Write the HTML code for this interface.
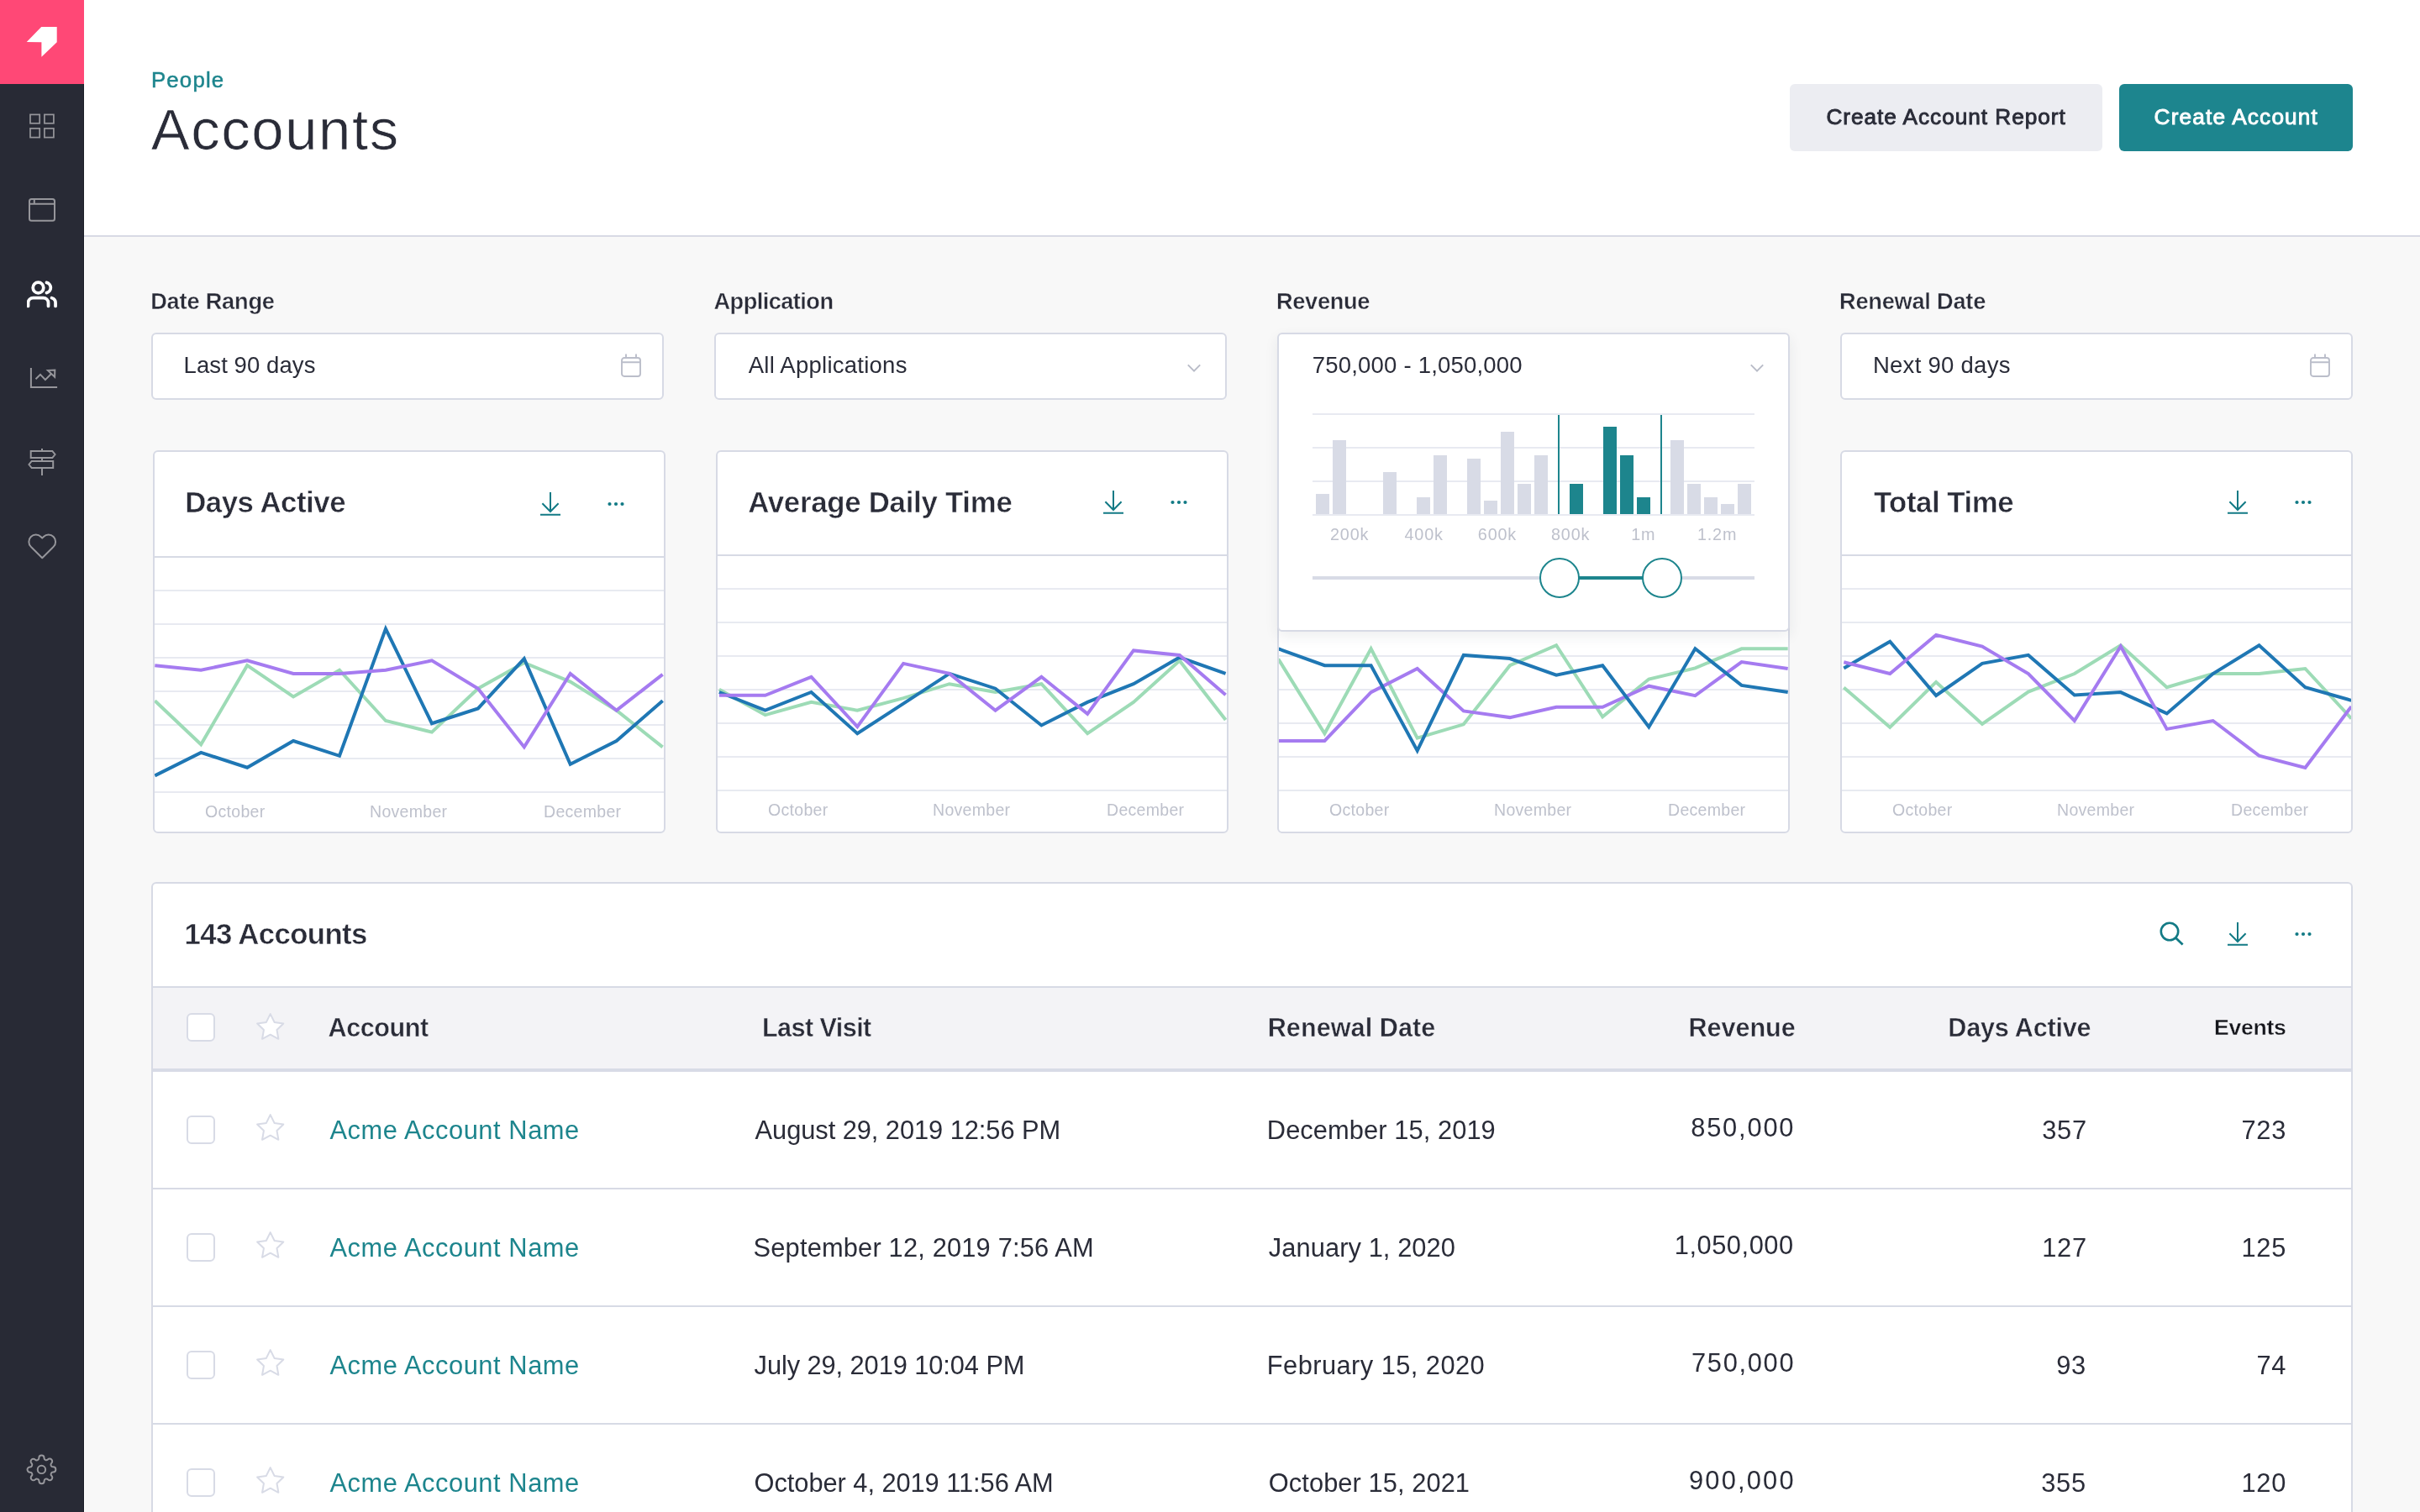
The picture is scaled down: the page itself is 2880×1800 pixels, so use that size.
<!DOCTYPE html>
<html><head><meta charset="utf-8"><title>Accounts</title>
<style>
html,body{margin:0;padding:0}
body{width:2880px;height:1800px;overflow:hidden;position:relative;background:#f8f8f8;font-family:"Liberation Sans",sans-serif}
.abs{position:absolute}
.txt{position:absolute;left:0;top:0;width:2880px;height:1800px;will-change:transform}
.t{position:absolute;white-space:pre;line-height:1;font-family:"Liberation Sans",sans-serif}
.card{position:absolute;box-sizing:border-box;background:#fff;border:2px solid #d7dae5;border-radius:6px}
.hl{position:absolute;height:2px}
.cb{position:absolute;left:222px;width:34px;height:34px;box-sizing:border-box;border:2px solid #d8dbe6;border-radius:6px}
@media (max-width:2000px){body{zoom:.5}}
.inp{position:absolute;top:396px;width:610px;height:80px;box-sizing:border-box;background:#fff;border:2px solid #d7dae5;border-radius:6px}
</style></head><body>
<div class="abs" style="left:100px;top:0;width:2780px;height:280px;background:#fff"></div>
<div class="abs" style="left:100px;top:280px;width:2780px;height:2px;background:#d8dae5"></div>
<div class="abs" style="left:100px;top:282px;width:1px;height:1518px;background:#fff"></div>
<div class="abs" style="left:0;top:0;width:100px;height:1800px;background:#282a35"></div>
<div class="abs" style="left:99px;top:100px;width:1px;height:1700px;background:#1e2029"></div>
<div class="abs" style="left:0;top:0;width:100px;height:100px;background:#ff4876"></div>
<svg class="abs" style="left:0;top:0;width:100px;height:100px" viewBox="0 0 100 100"><polygon points="49.2,32 67.7,32 67.7,50.3 49.4,67.8 49.4,50.2 31.7,50" fill="#fff"/></svg>
<svg class="abs" style="left:30px;top:130px;width:40px;height:40px" viewBox="30 130 40 40"><g fill="none" stroke="#96969b" stroke-width="1.7"><rect x="36" y="136.4" width="11.2" height="10.4"/><rect x="52.9" y="136.4" width="11" height="10.4"/><rect x="36" y="152.9" width="11.2" height="10.7"/><rect x="52.9" y="152.9" width="11" height="10.7"/></g></svg>
<svg class="abs" style="left:30px;top:230px;width:40px;height:40px" viewBox="30 230 40 40"><g fill="none" stroke="#96969b" stroke-width="2"><rect x="35" y="236.9" width="30" height="25.8" rx="2.5"/><path d="M35 242.8H65M40.8 237V242.8"/></g></svg>
<svg class="abs" style="left:32px;top:332px;width:36px;height:36px" viewBox="0 0 24 24"><g fill="none" stroke="#fff" stroke-width="2.5" stroke-linecap="round" stroke-linejoin="round"><path d="M17 21.6v-2.6a4 4 0 0 0-4-4H5a4 4 0 0 0-4 4v2.6"/><circle cx="9" cy="7" r="4.2"/><path d="M22.7 21.6v-2.6a4 4 0 0 0-3-3.87"/><path d="M15.6 2.9a4.2 4.2 0 0 1 0 8.2"/></g></svg>
<svg class="abs" style="left:30px;top:430px;width:44px;height:40px" viewBox="30 430 44 40"><g fill="none" stroke="#96969b" stroke-width="2"><path d="M36.9 438V461H68.1"/><path d="M42.5 451.2L48 445.9L53.9 452.1L61 445"/><path d="M56.9 440.9L65.3 440.5L65.1 448.7Z" stroke-linejoin="miter" stroke-miterlimit="3"/></g></svg>
<svg class="abs" style="left:30px;top:530px;width:40px;height:40px" viewBox="30 530 40 40"><g fill="none" stroke="#96969b" stroke-width="2"><path d="M50 534V537M50 545V549M50 557V566"/><path d="M36.7 537H62.3L65.5 541L62.3 545H36.7Z"/><path d="M63.2 549H37.7L34.5 553L37.7 557H63.2Z"/></g></svg>
<svg class="abs" style="left:31.76px;top:632.3px;width:36.48px;height:36.48px" viewBox="0 0 24 24"><path d="M20.84 4.61a5.5 5.5 0 0 0-7.78 0L12 5.67l-1.06-1.06a5.5 5.5 0 0 0-7.78 7.78l1.06 1.06L12 21.23l7.78-7.78 1.06-1.06a5.5 5.5 0 0 0 0-7.78z" fill="none" stroke="#96969b" stroke-width="1.3" stroke-linejoin="round"/></svg>
<svg class="abs" style="left:31.2px;top:1731.3px;width:36.88px;height:36.88px" viewBox="0 0 24 24"><g fill="none" stroke="#96969b" stroke-width="1.3"><circle cx="12" cy="12" r="3.05"/><path d="M19.4 15a1.65 1.65 0 0 0 .33 1.82l.06.06a2 2 0 0 1 0 2.83 2 2 0 0 1-2.83 0l-.06-.06a1.65 1.65 0 0 0-1.82-.33 1.65 1.65 0 0 0-1 1.51V21a2 2 0 0 1-2 2 2 2 0 0 1-2-2v-.09A1.65 1.65 0 0 0 9 19.4a1.65 1.65 0 0 0-1.82.33l-.06.06a2 2 0 0 1-2.83 0 2 2 0 0 1 0-2.83l.06-.06a1.65 1.65 0 0 0 .33-1.82 1.65 1.65 0 0 0-1.51-1H3a2 2 0 0 1-2-2 2 2 0 0 1 2-2h.09A1.65 1.65 0 0 0 4.6 9a1.65 1.65 0 0 0-.33-1.82l-.06-.06a2 2 0 0 1 0-2.83 2 2 0 0 1 2.83 0l.06.06a1.65 1.65 0 0 0 1.82.33H9a1.65 1.65 0 0 0 1-1.51V3a2 2 0 0 1 2-2 2 2 0 0 1 2 2v.09a1.65 1.65 0 0 0 1 1.51 1.65 1.65 0 0 0 1.82-.33l.06-.06a2 2 0 0 1 2.83 0 2 2 0 0 1 0 2.83l-.06.06a1.65 1.65 0 0 0-.33 1.82V9a1.65 1.65 0 0 0 1.51 1H21a2 2 0 0 1 2 2 2 2 0 0 1-2 2h-.09a1.65 1.65 0 0 0-1.51 1z"/></g></svg>
<div class="abs" style="left:2130px;top:100px;width:372px;height:80px;border-radius:6px;background:#ecedf2"></div>
<div class="abs" style="left:2522px;top:100px;width:278px;height:80px;border-radius:6px;background:#1d858e"></div>
<div class="inp" style="left:180px"></div>
<div class="inp" style="left:850px"></div>
<div class="inp" style="left:2190px"></div>
<svg class="abs" style="left:738px;top:420px;width:26px;height:30px" viewBox="-2 -6 26 30"><rect x="0" y="0" width="22" height="22" rx="3" fill="none" stroke="#bbbeca" stroke-width="1.9"/><path d="M0 5.2H22M5 -4.5V0M17 -4.5V0" stroke="#bbbeca" stroke-width="1.9" fill="none"/></svg>
<svg class="abs" style="left:2748px;top:420px;width:26px;height:30px" viewBox="-2 -6 26 30"><rect x="0" y="0" width="22" height="22" rx="3" fill="none" stroke="#bbbeca" stroke-width="1.9"/><path d="M0 5.2H22M5 -4.5V0M17 -4.5V0" stroke="#bbbeca" stroke-width="1.9" fill="none"/></svg>
<svg class="abs" style="left:1412px;top:432px;width:18px;height:12px" viewBox="-9 -6 18 12"><path d="M-7.2 -3.6L0 3.6L7.2 -3.6" stroke="#b9bcc8" stroke-width="2" fill="none"/></svg>
<div class="card" style="left:182px;top:536px;width:610px;height:456px"></div>
<div class="hl" style="left:184px;top:662px;width:606px;background:#d7dae5"></div>
<div class="hl" style="left:184px;top:702px;width:606px;background:#e8eaf1"></div>
<div class="hl" style="left:184px;top:742px;width:606px;background:#e8eaf1"></div>
<div class="hl" style="left:184px;top:782px;width:606px;background:#e8eaf1"></div>
<div class="hl" style="left:184px;top:822px;width:606px;background:#e8eaf1"></div>
<div class="hl" style="left:184px;top:862px;width:606px;background:#e8eaf1"></div>
<div class="hl" style="left:184px;top:902px;width:606px;background:#e8eaf1"></div>
<div class="hl" style="left:184px;top:942px;width:606px;background:#e8eaf1"></div>
<div class="card" style="left:852px;top:536px;width:610px;height:456px"></div>
<div class="hl" style="left:854px;top:660px;width:606px;background:#d7dae5"></div>
<div class="hl" style="left:854px;top:700px;width:606px;background:#e8eaf1"></div>
<div class="hl" style="left:854px;top:740px;width:606px;background:#e8eaf1"></div>
<div class="hl" style="left:854px;top:780px;width:606px;background:#e8eaf1"></div>
<div class="hl" style="left:854px;top:820px;width:606px;background:#e8eaf1"></div>
<div class="hl" style="left:854px;top:860px;width:606px;background:#e8eaf1"></div>
<div class="hl" style="left:854px;top:900px;width:606px;background:#e8eaf1"></div>
<div class="hl" style="left:854px;top:940px;width:606px;background:#e8eaf1"></div>
<div class="card" style="left:1520px;top:536px;width:610px;height:456px"></div>
<div class="hl" style="left:1522px;top:660px;width:606px;background:#d7dae5"></div>
<div class="hl" style="left:1522px;top:700px;width:606px;background:#e8eaf1"></div>
<div class="hl" style="left:1522px;top:740px;width:606px;background:#e8eaf1"></div>
<div class="hl" style="left:1522px;top:780px;width:606px;background:#e8eaf1"></div>
<div class="hl" style="left:1522px;top:820px;width:606px;background:#e8eaf1"></div>
<div class="hl" style="left:1522px;top:860px;width:606px;background:#e8eaf1"></div>
<div class="hl" style="left:1522px;top:900px;width:606px;background:#e8eaf1"></div>
<div class="hl" style="left:1522px;top:940px;width:606px;background:#e8eaf1"></div>
<div class="card" style="left:2190px;top:536px;width:610px;height:456px"></div>
<div class="hl" style="left:2192px;top:660px;width:606px;background:#d7dae5"></div>
<div class="hl" style="left:2192px;top:700px;width:606px;background:#e8eaf1"></div>
<div class="hl" style="left:2192px;top:740px;width:606px;background:#e8eaf1"></div>
<div class="hl" style="left:2192px;top:780px;width:606px;background:#e8eaf1"></div>
<div class="hl" style="left:2192px;top:820px;width:606px;background:#e8eaf1"></div>
<div class="hl" style="left:2192px;top:860px;width:606px;background:#e8eaf1"></div>
<div class="hl" style="left:2192px;top:900px;width:606px;background:#e8eaf1"></div>
<div class="hl" style="left:2192px;top:940px;width:606px;background:#e8eaf1"></div>
<svg class="abs" style="left:184px;top:660px;width:606px;height:300px" viewBox="184 660 606 300"><polyline points="184.3,834.3 239.2,886.2 294.2,792.2 349.1,829.5 404.0,797.7 459.0,858.0 513.9,871.6 568.9,819.7 623.8,789.0 678.7,811.6 733.7,845.7 788.6,889.4" fill="none" stroke="#9ddbb6" stroke-width="4" stroke-linejoin="miter"/><polyline points="184.3,923.4 239.2,895.9 294.2,913.7 349.1,882.0 404.0,899.8 459.0,748.5 513.9,861.2 568.9,843.4 623.8,784.1 678.7,909.8 733.7,882.0 788.6,834.3" fill="none" stroke="#1f77b4" stroke-width="4" stroke-linejoin="miter"/><polyline points="184.3,792.2 239.2,797.7 294.2,786.4 349.1,801.9 404.0,801.9 459.0,797.7 513.9,786.4 568.9,819.7 623.8,889.4 678.7,801.9 733.7,845.7 788.6,802.9" fill="none" stroke="#a57bf0" stroke-width="4" stroke-linejoin="miter"/></svg>
<svg class="abs" style="left:854px;top:660px;width:606px;height:300px" viewBox="854 660 606 300"><polyline points="855.9,820.7 910.7,851.2 965.5,835.9 1020.3,845.7 1075.1,831.1 1129.9,814.2 1184.6,824.0 1239.4,814.2 1294.2,873.2 1349.0,835.9 1403.8,786.4 1458.6,857.0" fill="none" stroke="#9ddbb6" stroke-width="4" stroke-linejoin="miter"/><polyline points="855.9,824.0 910.7,845.7 965.5,824.0 1020.3,873.2 1075.1,837.6 1129.9,801.9 1184.6,819.7 1239.4,863.5 1294.2,835.9 1349.0,814.2 1403.8,782.5 1458.6,801.9" fill="none" stroke="#1f77b4" stroke-width="4" stroke-linejoin="miter"/><polyline points="855.9,827.8 910.7,827.8 965.5,805.8 1020.3,865.1 1075.1,789.9 1129.9,801.9 1184.6,845.7 1239.4,805.8 1294.2,849.9 1349.0,774.4 1403.8,779.9 1458.6,827.2" fill="none" stroke="#a57bf0" stroke-width="4" stroke-linejoin="miter"/></svg>
<svg class="abs" style="left:1522px;top:660px;width:606px;height:300px" viewBox="1522 660 606 300"><polyline points="1521.3,784.5 1576.4,873.2 1631.6,772.3 1686.7,878.6 1741.8,862.3 1796.9,792.2 1852.1,768.2 1907.2,853.3 1962.3,808.5 2017.4,795.4 2072.6,772.3 2127.7,772.3" fill="none" stroke="#9ddbb6" stroke-width="4" stroke-linejoin="miter"/><polyline points="1521.3,881.9 1576.4,881.9 1631.6,824.1 1686.7,796.0 1741.8,846.4 1796.9,854.1 1852.1,841.8 1907.2,841.8 1962.3,816.7 2017.4,828.2 2072.6,788.1 2127.7,796.0" fill="none" stroke="#a57bf0" stroke-width="4" stroke-linejoin="miter"/><polyline points="1521.3,772.3 1576.4,792.2 1631.6,792.2 1686.7,893.6 1741.8,779.9 1796.9,784.0 1852.1,803.6 1907.2,792.2 1962.3,865.5 2017.4,772.3 2072.6,815.9 2127.7,824.1" fill="none" stroke="#1f77b4" stroke-width="4" stroke-linejoin="miter"/></svg>
<svg class="abs" style="left:2192px;top:660px;width:606px;height:300px" viewBox="2192 660 606 300"><polyline points="2194.3,818.4 2249.2,865.8 2304.1,811.9 2359.0,861.9 2413.9,823.6 2468.8,802.0 2523.8,768.2 2578.7,818.2 2633.6,802.0 2688.5,802.0 2743.4,796.0 2798.3,855.4" fill="none" stroke="#9ddbb6" stroke-width="4" stroke-linejoin="miter"/><polyline points="2194.3,795.5 2249.2,763.7 2304.1,828.0 2359.0,789.8 2413.9,779.9 2468.8,827.5 2523.8,824.1 2578.7,849.4 2633.6,802.0 2688.5,768.2 2743.4,818.2 2798.3,833.8" fill="none" stroke="#1f77b4" stroke-width="4" stroke-linejoin="miter"/><polyline points="2194.3,788.2 2249.2,802.0 2304.1,755.9 2359.0,769.5 2413.9,802.0 2468.8,858.0 2523.8,769.5 2578.7,867.9 2633.6,858.0 2688.5,899.6 2743.4,914.0 2798.3,841.1" fill="none" stroke="#a57bf0" stroke-width="4" stroke-linejoin="miter"/></svg>
<svg class="abs" style="left:641px;top:584px;width:28px;height:32px" viewBox="-14 -2 28 32"><path d="M0 0V23M-9.6 13.3L0 23L9.6 13.3M-12 26.8H12" fill="none" stroke="#127a85" stroke-width="2"/></svg>
<svg class="abs" style="left:721px;top:596px;width:24px;height:8px" viewBox="-12 -4 24 8"><circle cx="-7.5" cy="0" r="2.1" fill="#127a85"/><circle cx="0" cy="0" r="2.1" fill="#127a85"/><circle cx="7.5" cy="0" r="2.1" fill="#127a85"/></svg>
<svg class="abs" style="left:1311px;top:582px;width:28px;height:32px" viewBox="-14 -2 28 32"><path d="M0 0V23M-9.6 13.3L0 23L9.6 13.3M-12 26.8H12" fill="none" stroke="#127a85" stroke-width="2"/></svg>
<svg class="abs" style="left:1391px;top:594px;width:24px;height:8px" viewBox="-12 -4 24 8"><circle cx="-7.5" cy="0" r="2.1" fill="#127a85"/><circle cx="0" cy="0" r="2.1" fill="#127a85"/><circle cx="7.5" cy="0" r="2.1" fill="#127a85"/></svg>
<svg class="abs" style="left:2649px;top:582px;width:28px;height:32px" viewBox="-14 -2 28 32"><path d="M0 0V23M-9.6 13.3L0 23L9.6 13.3M-12 26.8H12" fill="none" stroke="#127a85" stroke-width="2"/></svg>
<svg class="abs" style="left:2729px;top:594px;width:24px;height:8px" viewBox="-12 -4 24 8"><circle cx="-7.5" cy="0" r="2.1" fill="#127a85"/><circle cx="0" cy="0" r="2.1" fill="#127a85"/><circle cx="7.5" cy="0" r="2.1" fill="#127a85"/></svg>
<div class="abs" style="left:1520px;top:396px;width:610px;height:356px;box-sizing:border-box;background:#fff;border:2px solid #d7dae5;border-radius:6px;box-shadow:0 6px 16px rgba(40,50,70,0.08)"></div>
<svg class="abs" style="left:2082px;top:432px;width:18px;height:12px" viewBox="-9 -6 18 12"><path d="M-7.2 -3.6L0 3.6L7.2 -3.6" stroke="#b9bcc8" stroke-width="2" fill="none"/></svg>
<div class="hl" style="left:1562px;top:492px;width:526px;background:#e8eaf1"></div>
<div class="hl" style="left:1562px;top:532px;width:526px;background:#e8eaf1"></div>
<div class="hl" style="left:1562px;top:572px;width:526px;background:#e8eaf1"></div>
<div class="hl" style="left:1562px;top:612px;width:526px;background:#e8eaf1"></div>
<div class="abs" style="left:1566px;top:588px;width:16px;height:24px;background:#d8dbe6"></div>
<div class="abs" style="left:1586px;top:524px;width:16px;height:88px;background:#d8dbe6"></div>
<div class="abs" style="left:1646px;top:562px;width:16px;height:50px;background:#d8dbe6"></div>
<div class="abs" style="left:1686px;top:592px;width:16px;height:20px;background:#d8dbe6"></div>
<div class="abs" style="left:1706px;top:542px;width:16px;height:70px;background:#d8dbe6"></div>
<div class="abs" style="left:1746px;top:546px;width:16px;height:66px;background:#d8dbe6"></div>
<div class="abs" style="left:1766px;top:596px;width:16px;height:16px;background:#d8dbe6"></div>
<div class="abs" style="left:1786px;top:514px;width:16px;height:98px;background:#d8dbe6"></div>
<div class="abs" style="left:1806px;top:576px;width:16px;height:36px;background:#d8dbe6"></div>
<div class="abs" style="left:1826px;top:542px;width:16px;height:70px;background:#d8dbe6"></div>
<div class="abs" style="left:1868px;top:576px;width:16px;height:36px;background:#1d858d"></div>
<div class="abs" style="left:1908px;top:508px;width:16px;height:104px;background:#1d858d"></div>
<div class="abs" style="left:1928px;top:542px;width:16px;height:70px;background:#1d858d"></div>
<div class="abs" style="left:1948px;top:592px;width:16px;height:20px;background:#1d858d"></div>
<div class="abs" style="left:1988px;top:524px;width:16px;height:88px;background:#d8dbe6"></div>
<div class="abs" style="left:2008px;top:576px;width:16px;height:36px;background:#d8dbe6"></div>
<div class="abs" style="left:2028px;top:592px;width:16px;height:20px;background:#d8dbe6"></div>
<div class="abs" style="left:2048px;top:600px;width:16px;height:12px;background:#d8dbe6"></div>
<div class="abs" style="left:2068px;top:576px;width:16px;height:36px;background:#d8dbe6"></div>
<div class="abs" style="left:1854px;top:494px;width:2px;height:118px;background:#1d858d"></div>
<div class="abs" style="left:1976.2px;top:494px;width:2px;height:118px;background:#1d858d"></div>
<div class="abs" style="left:1562px;top:686px;width:526px;height:4px;background:#d8dbe6"></div>
<div class="abs" style="left:1856px;top:686px;width:122px;height:4px;background:#1d858d"></div>
<div class="abs" style="left:1832px;top:664px;width:48px;height:48px;border-radius:50%;background:#fff;border:2px solid #1d858d;box-sizing:border-box"></div>
<div class="abs" style="left:1954px;top:664px;width:48px;height:48px;border-radius:50%;background:#fff;border:2px solid #1d858d;box-sizing:border-box"></div>
<div class="card" style="left:180px;top:1050px;width:2620px;height:800px;border-radius:6px"></div>
<div class="hl" style="left:182px;top:1174px;width:2616px;background:#d7dae5"></div>
<div class="abs" style="left:182px;top:1176px;width:2616px;height:96px;background:#f3f3f6"></div>
<div class="abs" style="left:182px;top:1272px;width:2616px;height:4px;background:#d8dbe6"></div>
<div class="hl" style="left:182px;top:1414px;width:2616px;background:#d7dae5"></div>
<div class="hl" style="left:182px;top:1554px;width:2616px;background:#d7dae5"></div>
<div class="hl" style="left:182px;top:1694px;width:2616px;background:#d7dae5"></div>
<div class="cb" style="top:1206px;background:#fff"></div>
<svg class="abs" style="left:303.2px;top:1204.1px;width:37.44px;height:37.44px" viewBox="0 0 24 24"><polygon points="12 2 15.09 8.26 22 9.27 17 14.14 18.18 21.02 12 17.77 5.82 21.02 7 14.14 2 9.27 8.91 8.26 12 2" fill="#fff" stroke="#d8dbe6" stroke-width="1.3" stroke-linejoin="round"/></svg>
<div class="cb" style="top:1328px;background:#fff"></div>
<svg class="abs" style="left:303.2px;top:1324px;width:37.44px;height:37.44px" viewBox="0 0 24 24"><polygon points="12 2 15.09 8.26 22 9.27 17 14.14 18.18 21.02 12 17.77 5.82 21.02 7 14.14 2 9.27 8.91 8.26 12 2" fill="none" stroke="#d8dbe6" stroke-width="1.3" stroke-linejoin="round"/></svg>
<div class="cb" style="top:1468px;background:#fff"></div>
<svg class="abs" style="left:303.2px;top:1464px;width:37.44px;height:37.44px" viewBox="0 0 24 24"><polygon points="12 2 15.09 8.26 22 9.27 17 14.14 18.18 21.02 12 17.77 5.82 21.02 7 14.14 2 9.27 8.91 8.26 12 2" fill="none" stroke="#d8dbe6" stroke-width="1.3" stroke-linejoin="round"/></svg>
<div class="cb" style="top:1608px;background:#fff"></div>
<svg class="abs" style="left:303.2px;top:1604px;width:37.44px;height:37.44px" viewBox="0 0 24 24"><polygon points="12 2 15.09 8.26 22 9.27 17 14.14 18.18 21.02 12 17.77 5.82 21.02 7 14.14 2 9.27 8.91 8.26 12 2" fill="none" stroke="#d8dbe6" stroke-width="1.3" stroke-linejoin="round"/></svg>
<div class="cb" style="top:1748px;background:#fff"></div>
<svg class="abs" style="left:303.2px;top:1744px;width:37.44px;height:37.44px" viewBox="0 0 24 24"><polygon points="12 2 15.09 8.26 22 9.27 17 14.14 18.18 21.02 12 17.77 5.82 21.02 7 14.14 2 9.27 8.91 8.26 12 2" fill="none" stroke="#d8dbe6" stroke-width="1.3" stroke-linejoin="round"/></svg>
<svg class="abs" style="left:2566.1px;top:1092.6px;width:36px;height:36px" viewBox="-16 -16 36 36"><circle cx="0" cy="0" r="10.2" fill="none" stroke="#127a85" stroke-width="2.6"/><path d="M7.3 7.5L15.6 15.4" stroke="#127a85" stroke-width="2.8" fill="none"/></svg>
<svg class="abs" style="left:2649px;top:1096px;width:28px;height:32px" viewBox="-14 -2 28 32"><path d="M0 0V23M-9.6 13.3L0 23L9.6 13.3M-12 26.8H12" fill="none" stroke="#127a85" stroke-width="2"/></svg>
<svg class="abs" style="left:2729px;top:1108px;width:24px;height:8px" viewBox="-12 -4 24 8"><circle cx="-7.5" cy="0" r="2.1" fill="#127a85"/><circle cx="0" cy="0" r="2.1" fill="#127a85"/><circle cx="7.5" cy="0" r="2.1" fill="#127a85"/></svg>
<div class="txt">
<div class="t" style="left:179.9px;top:83px;font-size:25.8px;color:#1d858d;letter-spacing:1.2px;-webkit-text-stroke:0.5px #1d858d;">People</div>
<div class="t" style="left:179.8px;top:121px;font-size:68.9px;color:#2a2c38;letter-spacing:1.57px;-webkit-text-stroke:0.7px #fff;">Accounts</div>
<div class="t" style="left:2173.4px;top:126px;font-size:26.2px;color:#2a2c38;letter-spacing:0.97px;-webkit-text-stroke:0.9px #2a2c38;">Create Account Report</div>
<div class="t" style="left:2563.6px;top:126px;font-size:26.2px;color:#fff;letter-spacing:1.17px;-webkit-text-stroke:0.9px #fff;">Create Account</div>
<div class="t" style="left:179.2px;top:345px;font-size:27.2px;color:#2a2c38;font-weight:700;letter-spacing:-0.2px;-webkit-text-stroke:0.4px #f8f8f8;">Date Range</div>
<div class="t" style="left:849.5px;top:345px;font-size:27.2px;color:#2a2c38;font-weight:700;letter-spacing:-0.55px;-webkit-text-stroke:0.4px #f8f8f8;">Application</div>
<div class="t" style="left:1519.0px;top:345px;font-size:27.2px;color:#2a2c38;font-weight:700;letter-spacing:-0.33px;-webkit-text-stroke:0.4px #f8f8f8;">Revenue</div>
<div class="t" style="left:2189.0px;top:345px;font-size:27.2px;color:#2a2c38;font-weight:700;letter-spacing:-0.23px;-webkit-text-stroke:0.4px #f8f8f8;">Renewal Date</div>
<div class="t" style="left:218.6px;top:421px;font-size:27.5px;color:#2a2c38;letter-spacing:0.08px;">Last 90 days</div>
<div class="t" style="left:890.7px;top:421px;font-size:27.5px;color:#2a2c38;letter-spacing:0.25px;">All Applications</div>
<div class="t" style="left:1561.7px;top:421px;font-size:27.5px;color:#2a2c38;letter-spacing:0.21px;">750,000 - 1,050,000</div>
<div class="t" style="left:2228.9px;top:421px;font-size:27.5px;color:#2a2c38;letter-spacing:0.28px;">Next 90 days</div>
<div class="t" style="left:220.2px;top:581px;font-size:34.8px;color:#2a2c38;font-weight:700;letter-spacing:-0.47px;-webkit-text-stroke:0.5px #fff;">Days Active</div>
<div class="t" style="left:890.2px;top:581px;font-size:34.8px;color:#2a2c38;font-weight:700;letter-spacing:-0.27px;-webkit-text-stroke:0.5px #fff;">Average Daily Time</div>
<div class="t" style="left:2229.9px;top:581px;font-size:34.8px;color:#2a2c38;font-weight:700;letter-spacing:-0.46px;-webkit-text-stroke:0.5px #fff;">Total Time</div>
<div class="t" style="left:219.5px;top:1095px;font-size:34.8px;color:#2a2c38;font-weight:700;letter-spacing:-0.65px;-webkit-text-stroke:0.5px #fff;">143 Accounts</div>
<div class="t" style="left:390.6px;top:1208px;font-size:30.6px;color:#2a2c38;font-weight:700;letter-spacing:-0.45px;-webkit-text-stroke:0.45px #f3f3f6;">Account</div>
<div class="t" style="left:906.9px;top:1208px;font-size:30.6px;color:#2a2c38;font-weight:700;letter-spacing:-0.56px;-webkit-text-stroke:0.45px #f3f3f6;">Last Visit</div>
<div class="t" style="left:1508.7px;top:1208px;font-size:30.6px;color:#2a2c38;font-weight:700;letter-spacing:0.06px;-webkit-text-stroke:0.45px #f3f3f6;">Renewal Date</div>
<div class="t" style="left:2009.6px;top:1208px;font-size:30.6px;color:#2a2c38;font-weight:700;letter-spacing:-0.07px;-webkit-text-stroke:0.45px #f3f3f6;">Revenue</div>
<div class="t" style="left:2318.3px;top:1208px;font-size:30.6px;color:#2a2c38;font-weight:700;letter-spacing:-0.2px;-webkit-text-stroke:0.45px #f3f3f6;">Days Active</div>
<div class="t" style="left:2635.0px;top:1210px;font-size:26.6px;color:#15161c;font-weight:700;letter-spacing:-0.26px;-webkit-text-stroke:0.4px #f3f3f6;">Events</div>
<div class="t" style="left:392.5px;top:1331px;font-size:30.8px;color:#1d858d;letter-spacing:0.57px;">Acme Account Name</div>
<div class="t" style="left:898.6px;top:1331px;font-size:30.8px;color:#2a2c38;letter-spacing:-0.05px;">August 29, 2019 12:56 PM</div>
<div class="t" style="left:1507.8px;top:1331px;font-size:30.8px;color:#2a2c38;letter-spacing:0.09px;">December 15, 2019</div>
<div class="t" style="left:2012.2px;top:1328px;font-size:30.8px;color:#2a2c38;letter-spacing:1.83px;">850,000</div>
<div class="t" style="left:2430.2px;top:1331px;font-size:30.8px;color:#2a2c38;letter-spacing:0.8px;">357</div>
<div class="t" style="left:2667.4px;top:1331px;font-size:30.8px;color:#2a2c38;letter-spacing:0.8px;">723</div>
<div class="t" style="left:392.5px;top:1471px;font-size:30.8px;color:#1d858d;letter-spacing:0.57px;">Acme Account Name</div>
<div class="t" style="left:896.6px;top:1471px;font-size:30.8px;color:#2a2c38;letter-spacing:0.18px;">September 12, 2019 7:56 AM</div>
<div class="t" style="left:1509.8px;top:1471px;font-size:30.8px;color:#2a2c38;letter-spacing:0.09px;">January 1, 2020</div>
<div class="t" style="left:1992.7px;top:1468px;font-size:30.8px;color:#2a2c38;letter-spacing:0.56px;">1,050,000</div>
<div class="t" style="left:2430.2px;top:1471px;font-size:30.8px;color:#2a2c38;letter-spacing:0.8px;">127</div>
<div class="t" style="left:2667.4px;top:1471px;font-size:30.8px;color:#2a2c38;letter-spacing:0.8px;">125</div>
<div class="t" style="left:392.5px;top:1611px;font-size:30.8px;color:#1d858d;letter-spacing:0.57px;">Acme Account Name</div>
<div class="t" style="left:897.6px;top:1611px;font-size:30.8px;color:#2a2c38;letter-spacing:-0.08px;">July 29, 2019 10:04 PM</div>
<div class="t" style="left:1507.8px;top:1611px;font-size:30.8px;color:#2a2c38;letter-spacing:0.45px;">February 15, 2020</div>
<div class="t" style="left:2013.0px;top:1608px;font-size:30.8px;color:#2a2c38;letter-spacing:1.7px;">750,000</div>
<div class="t" style="left:2447.2px;top:1611px;font-size:30.8px;color:#2a2c38;letter-spacing:0.8px;">93</div>
<div class="t" style="left:2685.4px;top:1611px;font-size:30.8px;color:#2a2c38;letter-spacing:0.8px;">74</div>
<div class="t" style="left:392.5px;top:1751px;font-size:30.8px;color:#1d858d;letter-spacing:0.57px;">Acme Account Name</div>
<div class="t" style="left:897.6px;top:1751px;font-size:30.8px;color:#2a2c38;letter-spacing:-0.05px;">October 4, 2019 11:56 AM</div>
<div class="t" style="left:1509.8px;top:1751px;font-size:30.8px;color:#2a2c38;letter-spacing:0.08px;">October 15, 2021</div>
<div class="t" style="left:2010.0px;top:1748px;font-size:30.8px;color:#2a2c38;letter-spacing:2.2px;">900,000</div>
<div class="t" style="left:2429.2px;top:1751px;font-size:30.8px;color:#2a2c38;letter-spacing:0.8px;">355</div>
<div class="t" style="left:2667.4px;top:1751px;font-size:30.8px;color:#2a2c38;letter-spacing:0.8px;">120</div>
<div class="t" style="left:244.00px;top:957px;font-size:19.5px;color:#bec1cc;letter-spacing:0.3px">October</div>
<div class="t" style="left:440.00px;top:957px;font-size:19.5px;color:#bec1cc;letter-spacing:0.3px">November</div>
<div class="t" style="left:647.00px;top:957px;font-size:19.5px;color:#bec1cc;letter-spacing:0.3px">December</div>
<div class="t" style="left:914.00px;top:955px;font-size:19.5px;color:#bec1cc;letter-spacing:0.3px">October</div>
<div class="t" style="left:1110.00px;top:955px;font-size:19.5px;color:#bec1cc;letter-spacing:0.3px">November</div>
<div class="t" style="left:1317.00px;top:955px;font-size:19.5px;color:#bec1cc;letter-spacing:0.3px">December</div>
<div class="t" style="left:1582.00px;top:955px;font-size:19.5px;color:#bec1cc;letter-spacing:0.3px">October</div>
<div class="t" style="left:1778.00px;top:955px;font-size:19.5px;color:#bec1cc;letter-spacing:0.3px">November</div>
<div class="t" style="left:1985.00px;top:955px;font-size:19.5px;color:#bec1cc;letter-spacing:0.3px">December</div>
<div class="t" style="left:2252.00px;top:955px;font-size:19.5px;color:#bec1cc;letter-spacing:0.3px">October</div>
<div class="t" style="left:2448.00px;top:955px;font-size:19.5px;color:#bec1cc;letter-spacing:0.3px">November</div>
<div class="t" style="left:2655.00px;top:955px;font-size:19.5px;color:#bec1cc;letter-spacing:0.3px">December</div>
<div class="t" style="left:1583.00px;top:627px;font-size:19.8px;color:#bec1cc;letter-spacing:0.85px">200k</div>
<div class="t" style="left:1671.50px;top:627px;font-size:19.8px;color:#bec1cc;letter-spacing:0.85px">400k</div>
<div class="t" style="left:1758.80px;top:627px;font-size:19.8px;color:#bec1cc;letter-spacing:0.85px">600k</div>
<div class="t" style="left:1846.00px;top:627px;font-size:19.8px;color:#bec1cc;letter-spacing:0.85px">800k</div>
<div class="t" style="left:1941.20px;top:627px;font-size:19.8px;color:#bec1cc;letter-spacing:0.85px">1m</div>
<div class="t" style="left:2019.90px;top:627px;font-size:19.8px;color:#bec1cc;letter-spacing:0.85px">1.2m</div>
</div>
</body></html>
